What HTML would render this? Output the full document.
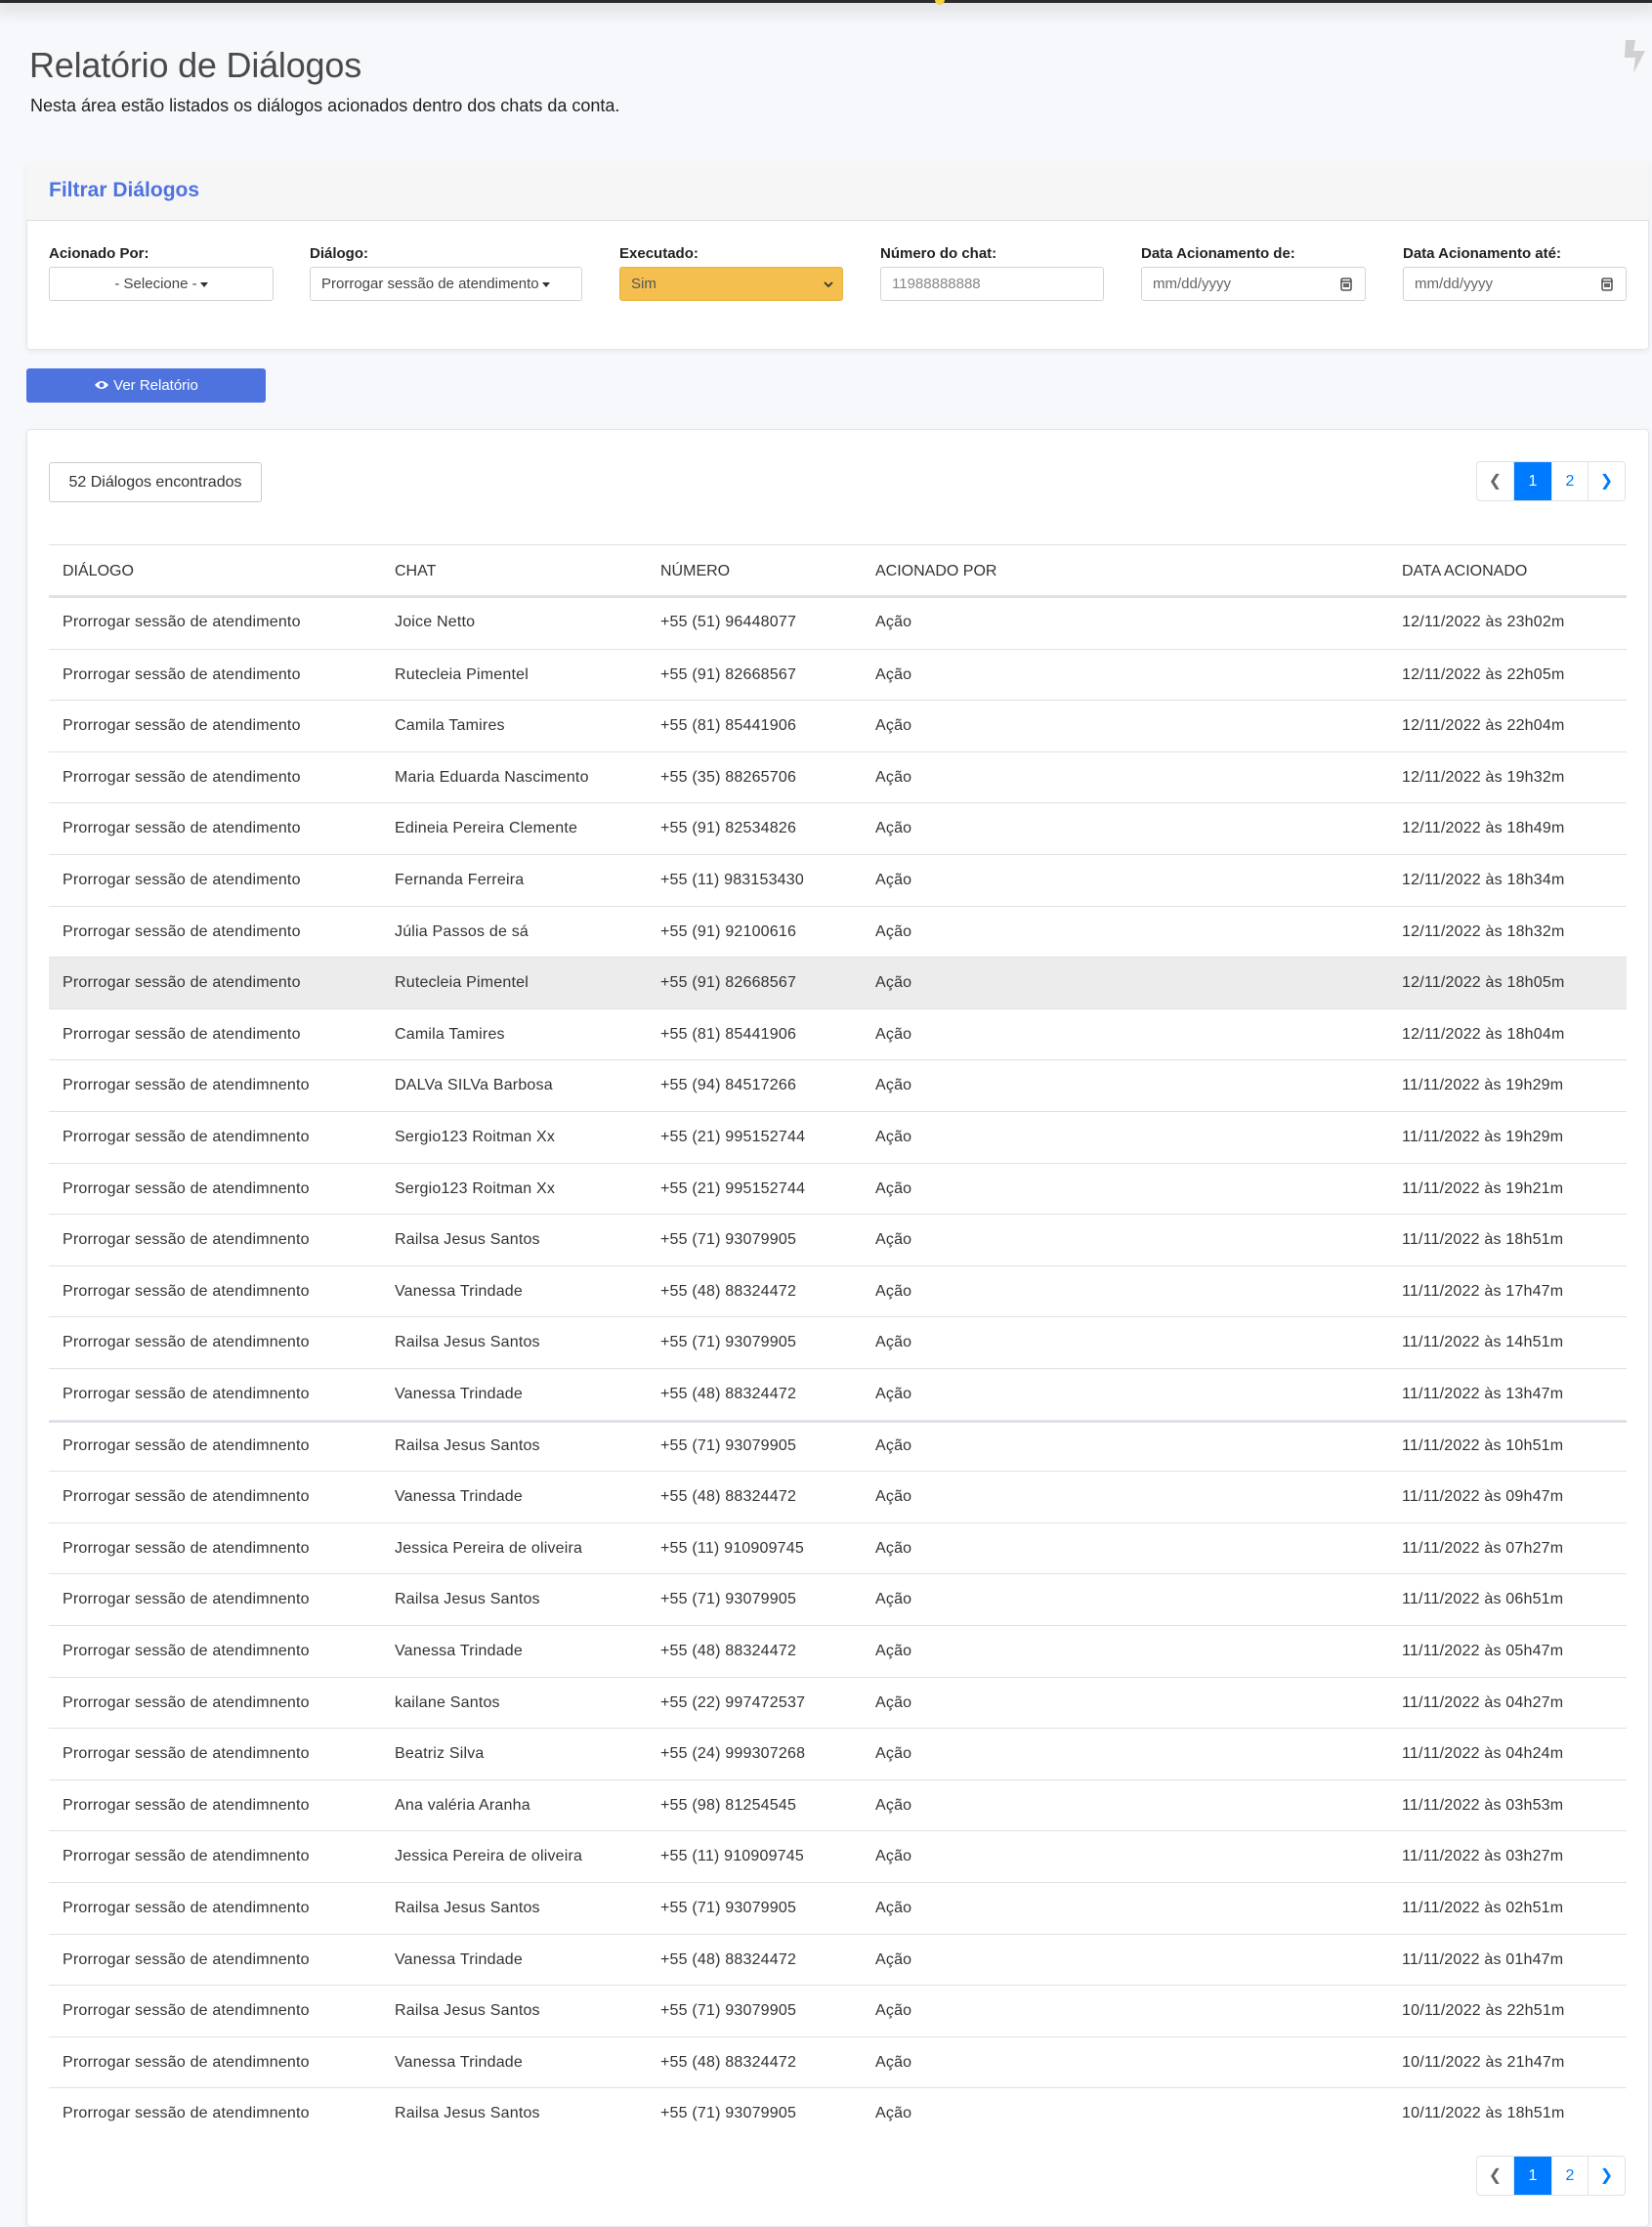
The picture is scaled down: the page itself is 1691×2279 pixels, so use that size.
<!DOCTYPE html>
<html><head><meta charset="utf-8">
<style>
*{box-sizing:border-box;margin:0;padding:0}
body{width:1691px;height:2270px;background:#f7f8fc;font-family:"Liberation Sans",sans-serif;color:#333;position:relative;overflow:hidden}
.abs{position:absolute}
.topbar{left:0;top:0;width:1691px;height:3px;background:#2b2b2b;box-shadow:0 2px 18px 6px rgba(0,0,0,.12)}
h1{position:absolute;left:30px;top:46px;font-size:36px;font-weight:normal;color:#4a4a4a;letter-spacing:-0.2px}
.sub{left:31px;top:98px;font-size:18px;color:#222}
.card{background:#fff;border:1px solid #e3e6ec;border-radius:4px;box-shadow:0 2px 6px rgba(0,0,0,.06)}
.fhead{left:27px;top:166px;width:1661px;height:60px;background:#f6f6f6;border-bottom:1px solid #dcdcdc;border-radius:4px 4px 0 0}
.ftitle{left:50px;top:183px;font-size:21px;font-weight:bold;color:#4e73df}
.lbl{top:251px;font-size:15px;font-weight:bold;color:#222}
.inp{top:273px;height:35px;border:1px solid #cfd3d8;border-radius:3px;background:#fff;font-size:15px;color:#555;line-height:33px;padding-left:11px}
.caret{display:inline-block;width:0;height:0;border-left:4px solid transparent;border-right:4px solid transparent;border-top:5px solid #333;vertical-align:middle;margin-left:3px}
.btn{left:27px;top:377px;width:245px;height:35px;background:#4e73df;border-radius:3px;color:#fff;font-size:15px;text-align:center;line-height:35px}
.badge{left:50px;top:473px;width:218px;height:41px;border:1px solid #ccc;border-radius:3px;font-size:16px;line-height:39px;text-align:center;color:#333;background:#fff}
.pg{height:41px;border:1px solid #dee2e6;border-radius:4px;display:flex;overflow:hidden;background:#fff}
.pg div{height:39px;line-height:39px;text-align:center;font-size:16px;color:#007bff;border-right:1px solid #dee2e6}
.pg div:last-child{border-right:none}
.pg .act{background:#007bff;color:#fff}
.th{top:576px;font-size:16px;color:#333}
.row{position:absolute;left:50px;width:1615px;height:52.6px;border-top:1px solid #dee2e6;font-size:16px;color:#333;letter-spacing:0.2px}
.row span{position:absolute;top:17px}
.hl{background:#ececec}
</style></head><body>
<div class="abs topbar"></div>
<div class="abs" style="left:957px;top:0;width:10px;height:5px;background:#f2d23c;border-radius:0 0 5px 5px"></div>
<svg class="abs" style="left:1661px;top:40px" width="24" height="36" viewBox="0 0 24 36"><path d="M3 1 L13 1 L11 12 L23 12 L11 35 L13 19 L2 19 Z" fill="#d0d0d0"/></svg>
<h1>Relatório de Diálogos</h1>
<div class="abs sub">Nesta área estão listados os diálogos acionados dentro dos chats da conta.</div>

<div class="abs card" style="left:27px;top:166px;width:1661px;height:192px"></div>
<div class="abs fhead"></div>
<div class="abs ftitle">Filtrar Diálogos</div>

<div class="abs lbl" style="left:50px">Acionado Por:</div>
<div class="abs inp" style="left:50px;width:230px;text-align:center;padding-left:0;color:#444">- Selecione -<span class="caret"></span></div>
<div class="abs lbl" style="left:317px">Diálogo:</div>
<div class="abs inp" style="left:317px;width:279px;color:#444">Prorrogar sessão de atendimento<span class="caret"></span></div>
<div class="abs lbl" style="left:634px">Executado:</div>
<div class="abs inp" style="left:634px;width:229px;background:#f4bf4f;border-color:#e8b440;color:#555">Sim
<svg style="position:absolute;right:8px;top:12px" width="12" height="10" viewBox="0 0 12 10"><path d="M2 3 L6 7 L10 3" stroke="#333" stroke-width="1.8" fill="none"/></svg></div>
<div class="abs lbl" style="left:901px">Número do chat:</div>
<div class="abs inp" style="left:901px;width:229px;color:#888">11988888888</div>
<div class="abs lbl" style="left:1168px">Data Acionamento de:</div>
<div class="abs inp" style="left:1168px;width:230px;color:#666">mm/dd/yyyy
<svg style="position:absolute;right:13px;top:10px" width="12" height="14" viewBox="0 0 12 14"><rect x="1" y="1" width="10" height="12" rx="1.5" fill="none" stroke="#333" stroke-width="1.3"/><line x1="1" y1="4" x2="11" y2="4" stroke="#333" stroke-width="1.3"/><rect x="3" y="6" width="6" height="4" fill="#666"/></svg></div>
<div class="abs lbl" style="left:1436px">Data Acionamento até:</div>
<div class="abs inp" style="left:1436px;width:229px;color:#666">mm/dd/yyyy
<svg style="position:absolute;right:13px;top:10px" width="12" height="14" viewBox="0 0 12 14"><rect x="1" y="1" width="10" height="12" rx="1.5" fill="none" stroke="#333" stroke-width="1.3"/><line x1="1" y1="4" x2="11" y2="4" stroke="#333" stroke-width="1.3"/><rect x="3" y="6" width="6" height="4" fill="#666"/></svg></div>

<div class="abs btn"><svg width="16" height="12" viewBox="0 0 16 12" style="vertical-align:-1px;margin-right:4px"><path d="M1 6 Q8 -2 15 6 Q8 14 1 6Z" fill="#fff"/><circle cx="8" cy="6" r="2.5" fill="#4e73df"/></svg>Ver Relatório</div>

<div class="abs card" style="left:27px;top:439px;width:1661px;height:1840px"></div>
<div class="abs badge">52 Diálogos encontrados</div>
<div class="abs pg" style="left:1511px;top:472px"><div style="width:38px;color:#666">&#10094;</div><div class="act" style="width:39px">1</div><div style="width:37px">2</div><div style="width:37px">&#10095;</div></div>

<div class="abs" style="left:50px;top:557px;width:1615px;height:1px;background:#dee2e6"></div>
<div class="abs th" style="left:64px">DIÁLOGO</div>
<div class="abs th" style="left:404px">CHAT</div>
<div class="abs th" style="left:676px">NÚMERO</div>
<div class="abs th" style="left:896px">ACIONADO POR</div>
<div class="abs th" style="left:1435px">DATA ACIONADO</div>
<div class="abs" style="left:50px;top:609px;width:1615px;height:3px;background:#dee2e6"></div>

<div class="row" style="top:611px;border-top:none"><span style="left:14px">Prorrogar sessão de atendimento</span><span style="left:354px">Joice Netto</span><span style="left:626px">+55 (51) 96448077</span><span style="left:846px">Ação</span><span style="left:1385px">12/11/2022 às 23h02m</span></div>
<div class="row" style="top:663.6px"><span style="left:14px">Prorrogar sessão de atendimento</span><span style="left:354px">Rutecleia Pimentel</span><span style="left:626px">+55 (91) 82668567</span><span style="left:846px">Ação</span><span style="left:1385px">12/11/2022 às 22h05m</span></div>
<div class="row" style="top:716.2px"><span style="left:14px">Prorrogar sessão de atendimento</span><span style="left:354px">Camila Tamires</span><span style="left:626px">+55 (81) 85441906</span><span style="left:846px">Ação</span><span style="left:1385px">12/11/2022 às 22h04m</span></div>
<div class="row" style="top:768.8px"><span style="left:14px">Prorrogar sessão de atendimento</span><span style="left:354px">Maria Eduarda Nascimento</span><span style="left:626px">+55 (35) 88265706</span><span style="left:846px">Ação</span><span style="left:1385px">12/11/2022 às 19h32m</span></div>
<div class="row" style="top:821.4px"><span style="left:14px">Prorrogar sessão de atendimento</span><span style="left:354px">Edineia Pereira Clemente</span><span style="left:626px">+55 (91) 82534826</span><span style="left:846px">Ação</span><span style="left:1385px">12/11/2022 às 18h49m</span></div>
<div class="row" style="top:874px"><span style="left:14px">Prorrogar sessão de atendimento</span><span style="left:354px">Fernanda Ferreira</span><span style="left:626px">+55 (11) 983153430</span><span style="left:846px">Ação</span><span style="left:1385px">12/11/2022 às 18h34m</span></div>
<div class="row" style="top:926.6px"><span style="left:14px">Prorrogar sessão de atendimento</span><span style="left:354px">Júlia Passos de sá</span><span style="left:626px">+55 (91) 92100616</span><span style="left:846px">Ação</span><span style="left:1385px">12/11/2022 às 18h32m</span></div>
<div class="row hl" style="top:979.2px"><span style="left:14px">Prorrogar sessão de atendimento</span><span style="left:354px">Rutecleia Pimentel</span><span style="left:626px">+55 (91) 82668567</span><span style="left:846px">Ação</span><span style="left:1385px">12/11/2022 às 18h05m</span></div>
<div class="row" style="top:1031.8px"><span style="left:14px">Prorrogar sessão de atendimento</span><span style="left:354px">Camila Tamires</span><span style="left:626px">+55 (81) 85441906</span><span style="left:846px">Ação</span><span style="left:1385px">12/11/2022 às 18h04m</span></div>
<div class="row" style="top:1084.4px"><span style="left:14px">Prorrogar sessão de atendimnento</span><span style="left:354px">DALVa SILVa Barbosa</span><span style="left:626px">+55 (94) 84517266</span><span style="left:846px">Ação</span><span style="left:1385px">11/11/2022 às 19h29m</span></div>
<div class="row" style="top:1137px"><span style="left:14px">Prorrogar sessão de atendimnento</span><span style="left:354px">Sergio123 Roitman Xx</span><span style="left:626px">+55 (21) 995152744</span><span style="left:846px">Ação</span><span style="left:1385px">11/11/2022 às 19h29m</span></div>
<div class="row" style="top:1189.6px"><span style="left:14px">Prorrogar sessão de atendimnento</span><span style="left:354px">Sergio123 Roitman Xx</span><span style="left:626px">+55 (21) 995152744</span><span style="left:846px">Ação</span><span style="left:1385px">11/11/2022 às 19h21m</span></div>
<div class="row" style="top:1242.2px"><span style="left:14px">Prorrogar sessão de atendimnento</span><span style="left:354px">Railsa Jesus Santos</span><span style="left:626px">+55 (71) 93079905</span><span style="left:846px">Ação</span><span style="left:1385px">11/11/2022 às 18h51m</span></div>
<div class="row" style="top:1294.8px"><span style="left:14px">Prorrogar sessão de atendimnento</span><span style="left:354px">Vanessa Trindade</span><span style="left:626px">+55 (48) 88324472</span><span style="left:846px">Ação</span><span style="left:1385px">11/11/2022 às 17h47m</span></div>
<div class="row" style="top:1347.4px"><span style="left:14px">Prorrogar sessão de atendimnento</span><span style="left:354px">Railsa Jesus Santos</span><span style="left:626px">+55 (71) 93079905</span><span style="left:846px">Ação</span><span style="left:1385px">11/11/2022 às 14h51m</span></div>
<div class="row" style="top:1400px"><span style="left:14px">Prorrogar sessão de atendimnento</span><span style="left:354px">Vanessa Trindade</span><span style="left:626px">+55 (48) 88324472</span><span style="left:846px">Ação</span><span style="left:1385px">11/11/2022 às 13h47m</span></div>
<div class="row" style="top:1452.6px;border-top:3px solid #dee2e6"><span style="left:14px;top:15px">Prorrogar sessão de atendimnento</span><span style="left:354px;top:15px">Railsa Jesus Santos</span><span style="left:626px;top:15px">+55 (71) 93079905</span><span style="left:846px;top:15px">Ação</span><span style="left:1385px;top:15px">11/11/2022 às 10h51m</span></div>
<div class="row" style="top:1505.2px"><span style="left:14px">Prorrogar sessão de atendimnento</span><span style="left:354px">Vanessa Trindade</span><span style="left:626px">+55 (48) 88324472</span><span style="left:846px">Ação</span><span style="left:1385px">11/11/2022 às 09h47m</span></div>
<div class="row" style="top:1557.8px"><span style="left:14px">Prorrogar sessão de atendimnento</span><span style="left:354px">Jessica Pereira de oliveira</span><span style="left:626px">+55 (11) 910909745</span><span style="left:846px">Ação</span><span style="left:1385px">11/11/2022 às 07h27m</span></div>
<div class="row" style="top:1610.4px"><span style="left:14px">Prorrogar sessão de atendimnento</span><span style="left:354px">Railsa Jesus Santos</span><span style="left:626px">+55 (71) 93079905</span><span style="left:846px">Ação</span><span style="left:1385px">11/11/2022 às 06h51m</span></div>
<div class="row" style="top:1663px"><span style="left:14px">Prorrogar sessão de atendimnento</span><span style="left:354px">Vanessa Trindade</span><span style="left:626px">+55 (48) 88324472</span><span style="left:846px">Ação</span><span style="left:1385px">11/11/2022 às 05h47m</span></div>
<div class="row" style="top:1715.6px"><span style="left:14px">Prorrogar sessão de atendimnento</span><span style="left:354px">kailane Santos</span><span style="left:626px">+55 (22) 997472537</span><span style="left:846px">Ação</span><span style="left:1385px">11/11/2022 às 04h27m</span></div>
<div class="row" style="top:1768.2px"><span style="left:14px">Prorrogar sessão de atendimnento</span><span style="left:354px">Beatriz Silva</span><span style="left:626px">+55 (24) 999307268</span><span style="left:846px">Ação</span><span style="left:1385px">11/11/2022 às 04h24m</span></div>
<div class="row" style="top:1820.8px"><span style="left:14px">Prorrogar sessão de atendimnento</span><span style="left:354px">Ana valéria Aranha</span><span style="left:626px">+55 (98) 81254545</span><span style="left:846px">Ação</span><span style="left:1385px">11/11/2022 às 03h53m</span></div>
<div class="row" style="top:1873.4px"><span style="left:14px">Prorrogar sessão de atendimnento</span><span style="left:354px">Jessica Pereira de oliveira</span><span style="left:626px">+55 (11) 910909745</span><span style="left:846px">Ação</span><span style="left:1385px">11/11/2022 às 03h27m</span></div>
<div class="row" style="top:1926px"><span style="left:14px">Prorrogar sessão de atendimnento</span><span style="left:354px">Railsa Jesus Santos</span><span style="left:626px">+55 (71) 93079905</span><span style="left:846px">Ação</span><span style="left:1385px">11/11/2022 às 02h51m</span></div>
<div class="row" style="top:1978.6px"><span style="left:14px">Prorrogar sessão de atendimnento</span><span style="left:354px">Vanessa Trindade</span><span style="left:626px">+55 (48) 88324472</span><span style="left:846px">Ação</span><span style="left:1385px">11/11/2022 às 01h47m</span></div>
<div class="row" style="top:2031.2px"><span style="left:14px">Prorrogar sessão de atendimnento</span><span style="left:354px">Railsa Jesus Santos</span><span style="left:626px">+55 (71) 93079905</span><span style="left:846px">Ação</span><span style="left:1385px">10/11/2022 às 22h51m</span></div>
<div class="row" style="top:2083.8px"><span style="left:14px">Prorrogar sessão de atendimnento</span><span style="left:354px">Vanessa Trindade</span><span style="left:626px">+55 (48) 88324472</span><span style="left:846px">Ação</span><span style="left:1385px">10/11/2022 às 21h47m</span></div>
<div class="row" style="top:2136.4px"><span style="left:14px">Prorrogar sessão de atendimnento</span><span style="left:354px">Railsa Jesus Santos</span><span style="left:626px">+55 (71) 93079905</span><span style="left:846px">Ação</span><span style="left:1385px">10/11/2022 às 18h51m</span></div>

<div class="abs pg" style="left:1511px;top:2206px"><div style="width:38px;color:#666">&#10094;</div><div class="act" style="width:39px">1</div><div style="width:37px">2</div><div style="width:37px">&#10095;</div></div>
</body></html>
